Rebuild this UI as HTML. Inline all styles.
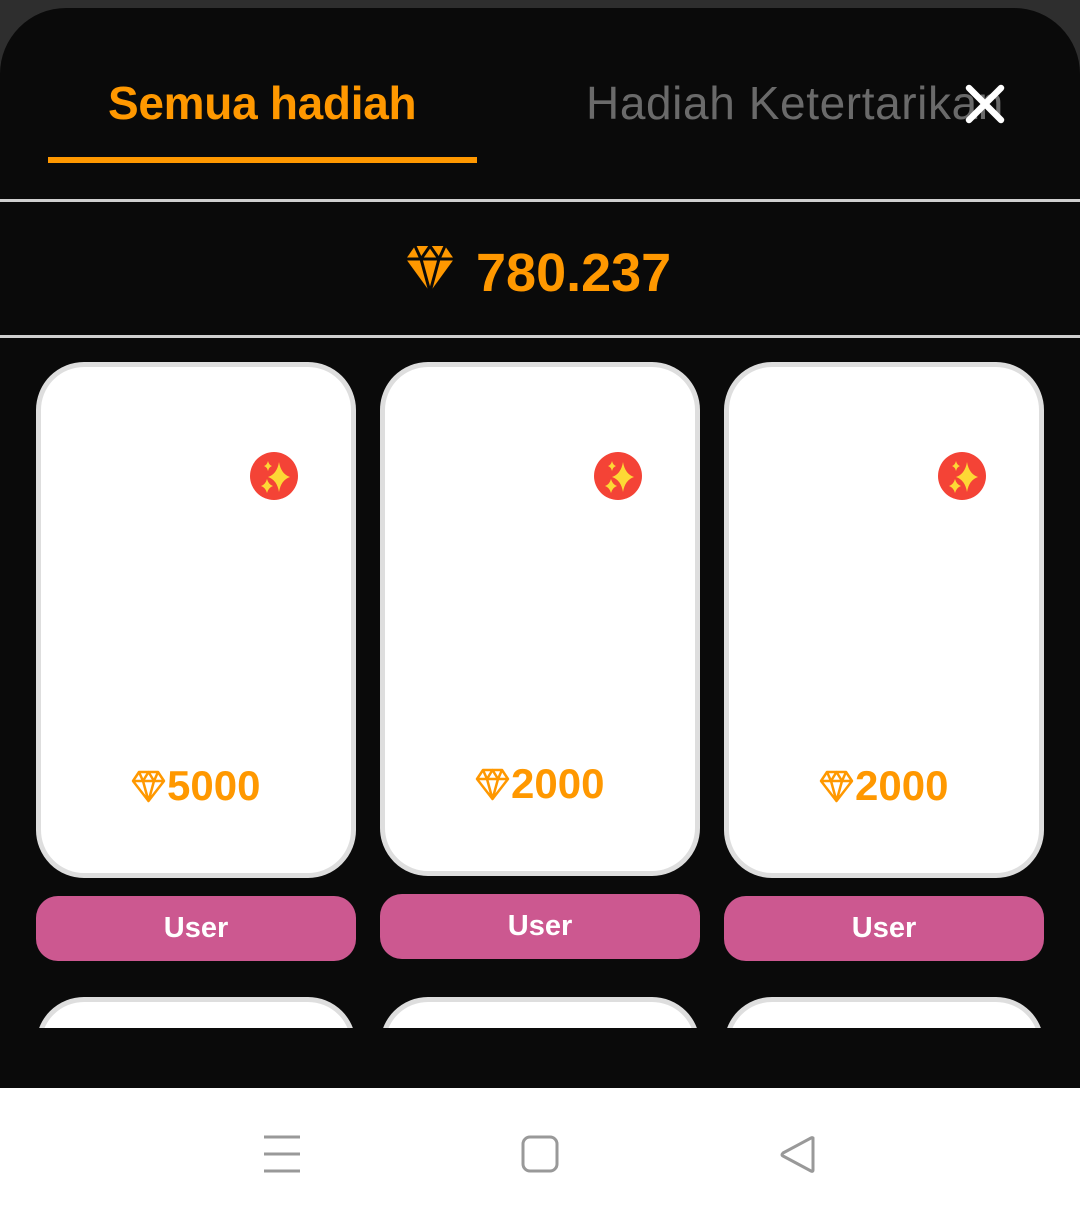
<!DOCTYPE html>
<html><head><meta charset="utf-8"><style>
*{margin:0;padding:0;box-sizing:border-box}
html{width:1080px;height:1219px;overflow:hidden}
body{width:1080px;height:1219px;background:#2e2e2e;position:relative;overflow:hidden;font-family:"Liberation Sans",sans-serif}
.panel{position:absolute;left:0;top:8px;width:1080px;height:1080px;background:#0a0a0a;border-radius:66px 66px 0 0;overflow:hidden}
.abs{position:absolute}
.tab1{left:108px;top:68px;font-size:46px;font-weight:bold;color:#ff9800;letter-spacing:-0.3px}
.tab2{left:586px;top:68px;font-size:46px;color:#6a6a6a;letter-spacing:0.6px;white-space:nowrap}
.ul{left:48px;top:149px;width:429px;height:6px;background:#ff9800}
.line{left:0;width:1080px;height:3px;background:#cfcfcf}
.bal{left:476px;top:234px;font-size:54px;font-weight:bold;color:#ff9800}
.card{position:absolute;width:320px;height:516px;background:#fff;border:5px solid #dedede;border-radius:48px}
.price{position:absolute;font-size:42px;font-weight:bold;color:#ff9800;display:flex;align-items:center}
.btn{position:absolute;width:320px;height:65px;background:#cc5890;border-radius:22px;color:#fff;font-size:29px;font-weight:bold;text-align:center;line-height:65px}
.nav{position:absolute;left:0;top:1088px;width:1080px;height:131px;background:#fff}
</style></head><body>
<div class="panel">
  <div class="abs tab1">Semua hadiah</div>
  <div class="abs tab2">Hadiah Ketertarikan</div>
  <svg class="abs" style="left:964px;top:75px" width="42" height="42" viewBox="0 0 42 42"><path d="M5 5L37 37M37 5L5 37" stroke="#fff" stroke-width="6.5" stroke-linecap="round"/></svg>
  <div class="abs ul"></div>
  <div class="abs line" style="top:191px"></div>
  <svg class="abs" style="left:405px;top:237px" width="50" height="48" viewBox="0 0 50 48"><path d="M10 1H40L49 14L25 47L1 14Z" fill="#ff9800"/><path d="M1 14H49M10 1L16 14L25 1L34 14L40 1M16 14L25 47M34 14L25 47" stroke="#0a0a0a" stroke-width="3" fill="none"/></svg>
  <div class="abs bal">780.237</div>
  <div class="abs line" style="top:327px"></div>

  <div class="card" style="left:36px;top:354px"></div>
  <div class="card" style="left:380px;top:354px;height:514px"></div>
  <div class="card" style="left:724px;top:354px"></div>

  <div class="card" style="left:36px;top:989px"></div>
  <div class="card" style="left:380px;top:989px"></div>
  <div class="card" style="left:724px;top:989px"></div>
  <div class="abs" style="left:0;top:1020px;width:1080px;height:60px;background:#0a0a0a"></div>

  <div class="btn" style="left:36px;top:888px">User</div>
  <div class="btn" style="left:380px;top:886px">User</div>
  <div class="btn" style="left:724px;top:888px">User</div>
</div>

<svg style="position:absolute;left:250px;top:452px" width="48" height="48" viewBox="0 0 48 48"><circle cx="24" cy="24" r="24" fill="#f44336"/><path d="M29 10Q31 22 40 25Q31 28 29 40Q27 28 18 25Q27 22 29 10Z" fill="#fdd835"/><path d="M17 27Q18.5 32.5 23 34Q18.5 35.5 17 41Q15.5 35.5 11 34Q15.5 32.5 17 27Z" fill="#fdd835"/><path d="M18 9Q19 13 22 14Q19 15 18 19Q17 15 14 14Q17 13 18 9Z" fill="#fdd835"/></svg>
<svg style="position:absolute;left:594px;top:452px" width="48" height="48" viewBox="0 0 48 48"><circle cx="24" cy="24" r="24" fill="#f44336"/><path d="M29 10Q31 22 40 25Q31 28 29 40Q27 28 18 25Q27 22 29 10Z" fill="#fdd835"/><path d="M17 27Q18.5 32.5 23 34Q18.5 35.5 17 41Q15.5 35.5 11 34Q15.5 32.5 17 27Z" fill="#fdd835"/><path d="M18 9Q19 13 22 14Q19 15 18 19Q17 15 14 14Q17 13 18 9Z" fill="#fdd835"/></svg>
<svg style="position:absolute;left:938px;top:452px" width="48" height="48" viewBox="0 0 48 48"><circle cx="24" cy="24" r="24" fill="#f44336"/><path d="M29 10Q31 22 40 25Q31 28 29 40Q27 28 18 25Q27 22 29 10Z" fill="#fdd835"/><path d="M17 27Q18.5 32.5 23 34Q18.5 35.5 17 41Q15.5 35.5 11 34Q15.5 32.5 17 27Z" fill="#fdd835"/><path d="M18 9Q19 13 22 14Q19 15 18 19Q17 15 14 14Q17 13 18 9Z" fill="#fdd835"/></svg>

<div class="price" style="left:131px;top:762px"><svg width="35" height="33" viewBox="0 0 35 33"><path d="M8 2H27L33 11L17.5 31L2 11Z M2 11H33 M8 2L12 11L17.5 2L23 11L27 2 M12 11L17.5 31L23 11" stroke="#ff9800" stroke-width="2.5" fill="none" stroke-linejoin="round"/></svg><span style="margin-left:1px">5000</span></div>
<div class="price" style="left:475px;top:760px"><svg width="35" height="33" viewBox="0 0 35 33"><path d="M8 2H27L33 11L17.5 31L2 11Z M2 11H33 M8 2L12 11L17.5 2L23 11L27 2 M12 11L17.5 31L23 11" stroke="#ff9800" stroke-width="2.5" fill="none" stroke-linejoin="round"/></svg><span style="margin-left:1px">2000</span></div>
<div class="price" style="left:819px;top:762px"><svg width="35" height="33" viewBox="0 0 35 33"><path d="M8 2H27L33 11L17.5 31L2 11Z M2 11H33 M8 2L12 11L17.5 2L23 11L27 2 M12 11L17.5 31L23 11" stroke="#ff9800" stroke-width="2.5" fill="none" stroke-linejoin="round"/></svg><span style="margin-left:1px">2000</span></div>

<div class="nav">
  <svg style="position:absolute;left:262px;top:46px" width="40" height="40" viewBox="0 0 40 40"><path d="M2 3H38M2 20H38M2 37H38" stroke="#999" stroke-width="3"/></svg>
  <svg style="position:absolute;left:521px;top:47px" width="38" height="38" viewBox="0 0 38 38"><rect x="2" y="2" width="34" height="34" rx="7" stroke="#999" stroke-width="3" fill="none"/></svg>
  <svg style="position:absolute;left:778px;top:47px" width="40" height="40" viewBox="0 0 40 40"><path d="M35 3V35Q35 37 33 36L5 21Q3 20 5 18L33 3Q35 2 35 4Z" stroke="#999" stroke-width="3" fill="none" stroke-linejoin="round"/></svg>
</div>
</body></html>
